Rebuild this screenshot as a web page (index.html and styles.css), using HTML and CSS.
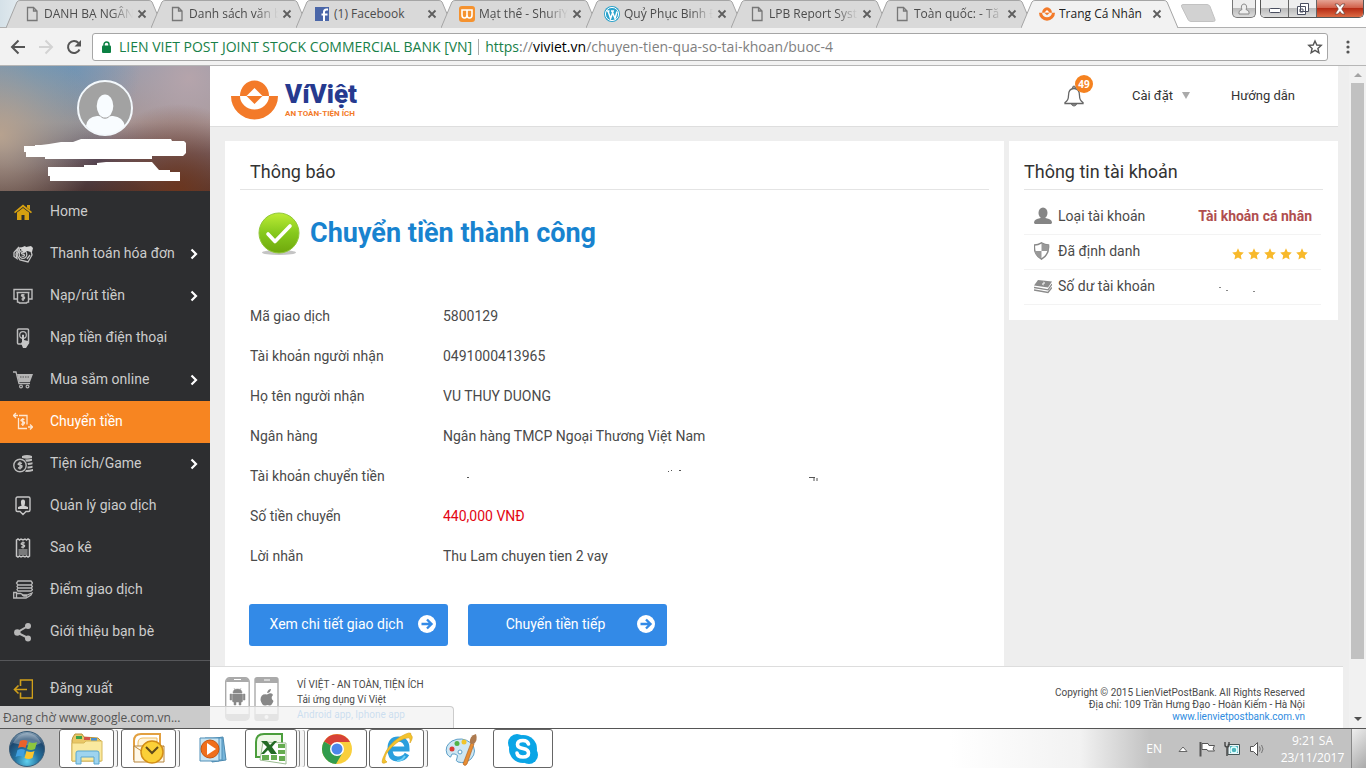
FILE: index.html
```html
<!DOCTYPE html>
<html lang="vi">
<head>
  <meta charset="UTF-8">
  <title>Trang Cá Nhân</title>
  <link rel="stylesheet" href="styles.css">
</head>
<body>
<svg class="defs" aria-hidden="true">
  <symbol id="page" viewBox="0 0 16 16"><path d="M3.500 1.500h6l3.500 3.500v9.500h-9.500zM9.500 1.500v3.500h3.500" fill="none" stroke="#777" stroke-width="1.300"/></symbol>
  <symbol id="close" viewBox="0 0 10 10"><path d="M1.500 1.500l7 7M8.500 1.500l-7 7" stroke="#5e5e5e" stroke-width="1.800"/></symbol>
  <symbol id="shape" viewBox="0 0 158 28" preserveAspectRatio="none"><path d="M0 28L11 2Q12 .5 14 .5H144Q146 .5 147 2L158 28" stroke="#a5a5a5" vector-effect="non-scaling-stroke"/></symbol>
  <symbol id="coin" viewBox="0 0 47 40"><path d="M9 16a14.500 15.500 0 0 1 29 0z" fill="#f37a29"/><path d="M0 16H9A14.500 13.500 0 0 0 38 16H47A23.500 23.500 0 0 1 0 16z" fill="#f37a29"/><path d="M23.500 8l8 8h-16z" fill="#fff"/><path d="M15.500 16h16l-8 8z" fill="#f37a29"/></symbol>
  <symbol id="star" viewBox="0 0 12 12"><path d="M6 .3l1.700 3.800 4.100.5-3 2.800.8 4.200L6 9.500l-3.600 2.100.8-4.200-3-2.800 4.100-.5z" fill="#f8b92b"/></symbol>
  <symbol id="chevron" viewBox="0 0 8 12"><path d="M1.500 1.500L6 6l-4.500 4.500" fill="none" stroke="#fff" stroke-width="2.200"/></symbol>
  <symbol id="go" viewBox="0 0 18 18"><circle cx="9" cy="9" r="9" fill="#fff"/><path d="M3.500 9h9M9 4.500L13.500 9 9 13.500" fill="none" stroke="#338ae7" stroke-width="2.400"/></symbol>
</svg>

<div class="tab-strip">
  <div class="tabs">
    <div class="tab"><svg class="tab-shape"><use href="#shape"/></svg><svg class="favicon"><use href="#page"/></svg><span class="tab-title">DANH BẠ NGÂN</span><button class="tab-close" aria-label="Đóng"><svg><use href="#close"/></svg></button></div>
    <div class="tab"><svg class="tab-shape"><use href="#shape"/></svg><svg class="favicon"><use href="#page"/></svg><span class="tab-title">Danh sách văn b</span><button class="tab-close" aria-label="Đóng"><svg><use href="#close"/></svg></button></div>
    <div class="tab"><svg class="tab-shape"><use href="#shape"/></svg>
      <svg class="favicon" viewBox="0 0 16 16"><rect x="1" y="1" width="14" height="14" fill="#4a66a8"/><path d="M14 3.500h-1.500q-2.500 0-2.500 2.500v9M7.500 8.500H13.500" fill="none" stroke="#fff" stroke-width="2"/></svg>
      <span class="tab-title short">(1) Facebook</span><button class="tab-close" aria-label="Đóng"><svg><use href="#close"/></svg></button></div>
    <div class="tab"><svg class="tab-shape"><use href="#shape"/></svg>
      <svg class="favicon" viewBox="0 0 16 16"><rect width="16" height="16" rx="3" fill="#f5922f"/><path d="M3 4v5q0 3 2.500 3T8 9V4v5q0 3 2.500 3T13 9V4z" fill="none" stroke="#fff" stroke-width="1.600"/></svg>
      <span class="tab-title">Mạt thế - ShuriY</span><button class="tab-close" aria-label="Đóng"><svg><use href="#close"/></svg></button></div>
    <div class="tab"><svg class="tab-shape"><use href="#shape"/></svg>
      <svg class="favicon" viewBox="0 0 16 16"><circle cx="8" cy="8" r="8" fill="#2ca3cc"/><circle cx="8" cy="8" r="6.600" fill="none" stroke="#fff"/><path d="M2.500 5h3M7 5h3M4 5l2.600 7.500L8.500 7M8 5l3 7.500L13 5.500" fill="none" stroke="#fff" stroke-width="1.500"/></svg>
      <span class="tab-title">Quỷ Phục Binh Đ</span><button class="tab-close" aria-label="Đóng"><svg><use href="#close"/></svg></button></div>
    <div class="tab"><svg class="tab-shape"><use href="#shape"/></svg><svg class="favicon"><use href="#page"/></svg><span class="tab-title">LPB Report Syst</span><button class="tab-close" aria-label="Đóng"><svg><use href="#close"/></svg></button></div>
    <div class="tab"><svg class="tab-shape"><use href="#shape"/></svg><svg class="favicon"><use href="#page"/></svg><span class="tab-title">Toàn quốc: - Tă</span><button class="tab-close" aria-label="Đóng"><svg><use href="#close"/></svg></button></div>
    <div class="tab active"><svg class="tab-shape"><use href="#shape"/></svg><svg class="favicon"><use href="#coin"/></svg><span class="tab-title short">Trang Cá Nhân</span><button class="tab-close" aria-label="Đóng"><svg><use href="#close"/></svg></button></div>
  </div>
  <button class="new-tab" aria-label="Thẻ mới"><svg viewBox="0 0 36 18"><path d="M3 .5h24q2 0 3 2l5 13q.5 2-1.500 2H11q-2 0-3-2L1.500 2.500Q1 .5 3 .5z" fill="#d2d2d2" stroke="#c2c2c2"/></svg></button>
  <div class="window-controls">
    <button class="win-btn user" aria-label="Người dùng"><svg viewBox="0 0 12 12"><path d="M1 11V9q0-1.500 3-2.500Q3 5 3.500 3 4 1 6 1t2.500 2Q9 5 8 6.500q3 1 3 2.500v2z" fill="#eee" stroke="#8b8b8b"/></svg></button>
    <div class="win-group">
      <button class="win-btn" aria-label="Thu nhỏ"><svg viewBox="0 0 12 12"><rect x=".5" y="5.500" width="11" height="4" rx="1" fill="#fff" stroke="#4a4f60"/></svg></button>
      <button class="win-btn" aria-label="Khôi phục"><svg viewBox="0 0 12 12"><path d="M3.500.5h8v8h-8zM.5 3.500h8v8h-8zM3 6h3v3H3z" fill="#fff" stroke="#4a4f60"/></svg></button>
      <button class="win-btn red" aria-label="Đóng cửa sổ"><svg viewBox="0 0 12 12"><path d="M1 1h3l2 2.500L8 1h3L7.700 6 11 11H8L6 8.500 4 11H1l3.300-5z" fill="#fff" stroke="#6a4038" stroke-width=".7"/></svg></button>
    </div>
  </div>
</div>

<div class="toolbar">
  <button class="tool" aria-label="Quay lại"><svg viewBox="0 0 16 16"><path d="M15 8H2.500M8.500 1.500L2 8l6.500 6.500" fill="none" stroke="#555" stroke-width="2"/></svg></button>
  <button class="tool" aria-label="Tiến"><svg viewBox="0 0 16 16"><path d="M1 8h12.500M7.500 1.500L14 8l-6.500 6.500" fill="none" stroke="#d3d3d3" stroke-width="2"/></svg></button>
  <button class="tool" aria-label="Tải lại"><svg viewBox="0 0 16 16"><path d="M13.500 10.500A6 6 0 1 1 12.500 4" fill="none" stroke="#555" stroke-width="2"/><path d="M15 1v6.500H8.500z" fill="#555"/></svg></button>
  <div class="address">
    <svg class="lock" viewBox="0 0 9 12"><path d="M2 5V3.500a2.500 2.500 0 0 1 5 0V5" fill="none" stroke="#0b8043" stroke-width="1.500"/><rect y="4.500" width="9" height="7.500" rx="1" fill="#0b8043"/></svg>
    <span class="owner">LIEN VIET POST JOINT STOCK COMMERCIAL BANK [VN]</span>
    <span class="url"><span class="scheme">https</span>://<b>viviet.vn</b>/chuyen-tien-qua-so-tai-khoan/buoc-4</span>
    <svg class="bookmark" viewBox="0 0 16 16"><path d="M8 2l1.800 4 4.400.4-3.300 3 1 4.400L8 11.400l-3.900 2.400 1-4.400-3.300-3L6.200 6z" fill="none" stroke="#555" stroke-width="1.400"/></svg>
  </div>
  <button class="dots" aria-label="Trình đơn"><svg viewBox="0 0 4 14"><g fill="#555"><circle cx="2" cy="2" r="1.600"/><circle cx="2" cy="7" r="1.600"/><circle cx="2" cy="12" r="1.600"/></g></svg></button>
</div>

<div class="viewport">
  <aside class="sidebar">
    <div class="profile">
      <svg class="avatar" viewBox="0 0 56 56"><circle cx="28" cy="28" r="27" fill="#a2a2a2"/><ellipse cx="28" cy="26" rx="8.300" ry="11.500" fill="#f8fcff"/><path d="M9 46q1-9 11-10 4-.5 5 2 3 1.500 6 0 1-2.500 5-2 10 1 12 10-8 9-20 9T9 46z" fill="#f8fcff"/><circle cx="28" cy="28" r="27" fill="none" stroke="#f3f8fc" stroke-width="2"/></svg>
      <svg class="strokes" viewBox="0 0 162 43"><path d="M0 7h11V6h6l8-1 12-2h12l8-3h90l1 2h12l2 2v10l-3 3h-31v3H21v-2H2v-5H0zM24 28h36v-2h13v-2l9-1h46l7 8h11v2h10v9H26v-5h-2z" fill="#fff"/></svg>
    </div>
    <nav class="menu">
      <a href="#"><svg class="icon" viewBox="0 0 20 20"><path d="M1 10L10 2.500 19 10l-1 1.200L10 5l-8 6.200z" fill="#d6a010"/><path d="M4 10.500L10 6l6 4.500V18h-4.500v-5h-3v5H4zM14 3h3v5l-3-2.500z" fill="#d6a010"/></svg><span>Home</span></a>
      <a href="#"><svg class="icon" viewBox="0 0 20 20"><g fill="none" stroke="#c4c4c4" stroke-width="1.300"><path d="M6 3L1 8.500v4l3 2L3 10z"/><path d="M7 4l11 3 1 4-4 7-8-2-3-5z"/><circle cx="10" cy="10.500" r="3.800"/><path d="M11.500 9q-3-1.500-3 .5l3 1.500q0 2-3 1M14 15l3-4M5 9l2-3"/></g><path d="M7 4l5-2 1 1 5-1 2 2-1 4-5-1-3 2z" fill="#d5d5d5"/></svg><span>Thanh toán hóa đơn</span><svg class="more"><use href="#chevron"/></svg></a>
      <a href="#"><svg class="icon" viewBox="0 0 20 20"><g fill="none" stroke="#bdbdbd" stroke-width="1.400"><path d="M4 13H1V3.500h18V13h-3M3.500 6.500h13"/><path d="M4.500 7v9q2 0 2 1h7q0-1 2-1V7"/><path d="M11.500 9q-3-1-3 .8l3 1.500q.3 2.500-3 1.500M10 8v7"/></g></svg><span>Nạp/rút tiền</span><svg class="more"><use href="#chevron"/></svg></a>
      <a href="#"><svg class="icon" viewBox="0 0 20 20"><rect x="4.500" y="1" width="11" height="15" rx="1" fill="none" stroke="#bdbdbd" stroke-width="1.500"/><circle cx="10" cy="7" r="3.300" fill="none" stroke="#bdbdbd" stroke-width="1.200"/><path d="M9 7q1-1 2 0v5l4 1v4l-2 3h-3l-2-5 1-1z" fill="#c6c6c6"/></svg><span>Nạp tiền điện thoại</span></a>
      <a href="#"><svg class="icon" viewBox="0 0 20 20"><path d="M0 2h3l3 11.500h11" fill="none" stroke="#b5b5b5" stroke-width="1.300"/><path d="M4 4h16l-3 8H6z" fill="#b5b5b5"/><path d="M7 7h10" stroke="#555" stroke-dasharray="1.500 1"/><g fill="none" stroke="#b5b5b5" stroke-width="1.200"><circle cx="8" cy="16.500" r="1.400"/><circle cx="14.500" cy="16.500" r="1.400"/></g></svg><span>Mua sắm online</span><svg class="more"><use href="#chevron"/></svg></a>
      <a href="#" class="active"><svg class="icon" viewBox="0 0 20 20"><g fill="none" stroke="#fff" stroke-opacity=".8" stroke-width="1.300"><path d="M5 3.500H.5M3 1L.5 3.500 3 6M15 15h4.500M17 12.500l2.500 2.500-2.500 2.500M6 3.500h8v9M14 16.500H5.500V6M11.500 7.500q-3.500-1-3.500 1l3.500 2q0 2.500-3.500 1.500M9.800 6v8"/></g></svg><span>Chuyển tiền</span></a>
      <a href="#"><svg class="icon" viewBox="0 0 20 20"><g fill="none" stroke="#bdbdbd" stroke-width="1.400"><circle cx="7" cy="11.500" r="6.200"/><path d="M9 9.500q-3.800-1.500-3.800.7L9 12q.2 2.700-4 1.700M7 7.500v8"/></g><path d="M9 2q5-2 10 0v2q-5 1.500-10 0zM12 5.500q4 0 7-.8v2q-3 1-5.500 1zM14.500 9q2.500 0 5-.8v2q-2 .8-4.500.8zM14.500 12.500q3 0 5-.8v2q-3 1-5 .8zM13 16q4 0 7-1v2q-4 1.200-8 .8z" fill="#bdbdbd"/></svg><span>Tiện ích/Game</span><svg class="more"><use href="#chevron"/></svg></a>
      <a href="#"><svg class="icon" viewBox="0 0 20 20"><path d="M4.500 1h11q1.500 0 1.500 1.500V14q0 1.500-1.500 1.500H13l-3 3-3-3H4.500Q3 15.500 3 14V2.500Q3 1 4.500 1z" fill="none" stroke="#c6c6c6" stroke-width="1.400"/><path d="M8 7q-.5-3.500 2-3.500T12 7q0 1.500-.8 2.500l3.800 1.500v2H5v-2l3.800-1.500Q8 8.500 8 7z" fill="#d0d0d0"/></svg><span>Quản lý giao dịch</span></a>
      <a href="#"><svg class="icon" viewBox="0 0 20 20"><path d="M3.500 2l1.500-1 1.500 1L8 1l2 1 2-1 1.500 1L15 1l1.500 1v16l-1.500 1-1.500-1-1.500 1-2-1-2 1-1.500-1L5 19l-1.500-1z" fill="none" stroke="#c6c6c6" stroke-width="1.500"/><path d="M11.800 4.800Q8 4 8.200 6l3.400 1.500Q12 9.800 8 9M10 3.500v7M5.500 12h9M5.500 14h9M5.500 16h9" fill="none" stroke="#c6c6c6" stroke-width="1.200"/></svg><span>Sao kê</span></a>
      <a href="#"><svg class="icon" viewBox="0 0 20 20"><g fill="none" stroke="#b8b8b8" stroke-width="1.300"><path d="M5 1h13l1.500 2L18 5H5L3.500 3zM5 5l-1 1.500L5 8h13l1.500-1.500L18 5M5 8l-1 1.500L5 11h13l1.500-1.500L18 8M.7 12.500H3.500V18H.7zM3.500 13.500h4l3 1.500H14l5-2-1 2-5 3H3.500M9 15l2 1h3"/></g></svg><span>Điểm giao dịch</span></a>
      <a href="#"><svg class="icon" viewBox="0 0 20 20"><path d="M15 4L4 10.500 15 16" fill="none" stroke="#b8b8b8" stroke-width="2"/><g fill="#b8b8b8"><circle cx="15" cy="4" r="3"/><circle cx="4.300" cy="10.500" r="3.200"/><circle cx="15" cy="16.500" r="3"/></g></svg><span>Giới thiệu bạn bè</span></a>
      <a href="#" class="logout"><svg class="icon" viewBox="0 0 20 20"><path d="M7.500 7V1h12v18h-12v-5.500M14 10.500H1.500M5.500 6.500l-4 4 4 4" fill="none" stroke="#d1a01a" stroke-width="1.600"/></svg><span>Đăng xuất</span></a>
    </nav>
  </aside>

  <div class="content">
    <header class="site-header">
      <a href="#" class="logo">
        <svg class="logo-mark"><use href="#coin"/></svg>
        <span class="logo-text"><span class="logo-name">VíViệt</span><span class="logo-slogan">AN TOÀN-TIỆN ÍCH</span></span>
      </a>
      <div class="header-links">
        <a href="#" class="bell" aria-label="Thông báo"><svg viewBox="0 0 20 22"><path d="M1 17.500q3.500-2 3.500-7Q4.500 3.500 10 3.500t5.500 7q0 5 3.500 7v1H1z" fill="none" stroke="#666" stroke-width="1.300"/><path d="M8.500 3Q8.500 1 10 1t1.500 2M7.500 19q.5 2 2.500 2t2.500-2z" fill="#999" stroke="#666"/></svg><span class="badge">49</span></a>
        <a href="#" class="settings">Cài đặt <svg viewBox="0 0 8 7"><path d="M0 0h8L4 7z" fill="#aaa"/></svg></a>
        <a href="#">Hướng dẫn</a>
      </div>
    </header>

    <div class="panels">
      <section class="panel main-panel">
        <h2 class="panel-title indent">Thông báo</h2>
        <div class="success">
          <svg viewBox="0 0 42 44">
            <defs><linearGradient id="green" x2="0" y2="1"><stop stop-color="#bdec35"/><stop offset=".5" stop-color="#86c91d"/><stop offset="1" stop-color="#6fa80c"/></linearGradient></defs>
            <ellipse cx="21" cy="40.500" rx="17" ry="2.500" fill="#c4c4c4"/><circle cx="21" cy="21" r="20" fill="url(#green)" stroke="#92c83a"/><path d="M10 22l7 7.500L32 14" fill="none" stroke="#fff" stroke-width="3.600" stroke-linecap="round" stroke-linejoin="round"/>
          </svg>
          <h1>Chuyển tiền thành công</h1>
        </div>
        <table class="details">
          <tr><th>Mã giao dịch</th><td>5800129</td></tr>
          <tr><th>Tài khoản người nhận</th><td>0491000413965</td></tr>
          <tr><th>Họ tên người nhận</th><td>VU THUY DUONG</td></tr>
          <tr><th>Ngân hàng</th><td>Ngân hàng TMCP Ngoại Thương Việt Nam</td></tr>
          <tr><th>Tài khoản chuyển tiền</th><td><svg class="marks" viewBox="0 0 380 16"><path d="M24 9.500h2M225 3.500h1M228 2.500h1M236 2.500h2M366 9.500h6M371 9v4M374 10v3" stroke="#555" fill="none"/></svg></td></tr>
          <tr><th>Số tiền chuyển</th><td class="amount">440,000 VNĐ</td></tr>
          <tr><th>Lời nhắn</th><td>Thu Lam chuyen tien 2 vay</td></tr>
        </table>
        <div class="actions">
          <button><span>Xem chi tiết giao dịch</span><svg><use href="#go"/></svg></button>
          <button><span>Chuyển tiền tiếp</span><svg><use href="#go"/></svg></button>
        </div>
      </section>

      <section class="panel account">
        <h2 class="panel-title">Thông tin tài khoản</h2>
        <ul>
          <li><svg viewBox="0 0 18 18"><ellipse cx="9" cy="6" rx="4.500" ry="5.500" fill="#858585"/><path d="M0 16q0-3 3-4l3.500-1h5L15 12q3 1 3 4l-1 1H1z" fill="#858585"/></svg><span>Loại tài khoản</span><strong>Tài khoản cá nhân</strong></li>
          <li><svg viewBox="0 0 18 18"><path d="M7.500.8Q11 3 14.500 3q1 9.500-7 14.200Q-.5 12.500.5 3 4 3 7.500.8z" fill="#fff" stroke="#888" stroke-width="1.500"/><path d="M7.500 1v8h7V3Q11 3 7.500 1zM7.500 9v8Q1 13 .5 9z" fill="#999"/></svg><span>Đã định danh</span>
            <div class="stars" role="img" aria-label="5 sao"><svg><use href="#star"/></svg><svg><use href="#star"/></svg><svg><use href="#star"/></svg><svg><use href="#star"/></svg><svg><use href="#star"/></svg></div></li>
          <li><svg viewBox="0 0 18 18"><path d="M4 3l14 1.500-4 6L0 8.500z" fill="#8c8c8c"/><path d="M9 5l2 1-3 1 2 1" fill="none" stroke="#ddd"/><path d="M0 10.500l14 2.300L18 7M0 13l14 2.500 4-5" fill="none" stroke="#8c8c8c" stroke-width="1.300"/></svg><span>Số dư tài khoản</span><svg class="balance" viewBox="0 0 100 16"><path d="M7 9.500h2M14 12.500h2M41 13.500h2" stroke="#888"/></svg></li>
        </ul>
      </section>
    </div>

    <footer class="site-footer">
      <div class="apps">
        <svg viewBox="0 0 54 44">
          <rect x=".7" y=".7" width="23.500" height="42.500" rx="4" fill="#fff" stroke="#aaa" stroke-width="1.400"/><path d="M1 5q0-4 4-4h15q4 0 4 4zM1 37h23v2q0 4-4 4H5q-4 0-4-4z" fill="#aaa"/><path d="M9 2.500h7" stroke="#fff"/>
          <path d="M8 16q0-4 4.500-4t4.500 4zM7.500 17h10v7q0 1-1 1h-8q-1 0-1-1zM5 17h1.800v6H5zM18.200 17H20v6h-1.800zM9 25h2v3H9zM14 25h2v3h-2zM9 11l1 2M16 11l-1 2" fill="#888" stroke="#888" stroke-width=".5"/>
          <rect x="30" y=".7" width="23" height="42.500" rx="2" fill="#fff" stroke="#aaa" stroke-width="1.400"/><path d="M30 1h23v5H30zM30 37h23v6H30z" fill="#aaa"/><path d="M39 3h6" stroke="#fff"/><circle cx="41.500" cy="40" r="2" fill="#fff"/>
          <path d="M42 16q1-4 4-4-.5 4-4 4zM42 17.500q5-2.500 6 .5-3 3 .5 6-2 5-4 4.500-2-1-4 0Q37 29 35.500 23q0-6.500 6.500-5.500z" fill="#888"/>
        </svg>
        <div class="app-text">VÍ VIỆT - AN TOÀN, TIỆN ÍCH<br>Tải ứng dụng Ví Việt<br><a href="#">Android app, Iphone app</a></div>
      </div>
      <div class="copyright">Copyright © 2015 LienVietPostBank. All Rights Reserved<br>Địa chỉ: 109 Trần Hưng Đạo - Hoàn Kiếm - Hà Nội<br><a href="#">www.lienvietpostbank.com.vn</a></div>
    </footer>
  </div>

  <div class="scrollbar">
    <svg viewBox="0 0 17 17"><path d="M5 11h8L9 7z" fill="#a3a3a3"/></svg>
    <div class="thumb"></div>
    <svg class="down" viewBox="0 0 17 17"><path d="M5 6h8l-4 4z" fill="#505050"/></svg>
  </div>
  <div class="status">Đang chờ www.google.com.vn...</div>
</div>

<div class="taskbar">
  <button class="start" aria-label="Start"><svg viewBox="0 0 38 38">
    <defs><radialGradient id="orb" cx=".5" cy=".85" r=".85"><stop stop-color="#5fd0ee"/><stop offset=".4" stop-color="#24729f"/><stop offset=".75" stop-color="#1d476e"/><stop offset="1" stop-color="#90a9bd"/></radialGradient></defs>
    <circle cx="19" cy="19" r="17.500" fill="url(#orb)" stroke="#395c78"/><path d="M5 13Q10 3 19 3t14 10q-8 5-28 0z" fill="#fff" opacity=".28"/>
    <path d="M12 11q4-2 7.500 0l-2 7q-3.500-2-7.500 0z" fill="#e9622b"/><path d="M21 12q4 2 8 0l-2 7q-4 2-8 0z" fill="#8cc63e"/><path d="M9.500 20q4-2 7.500 0l-2 7q-3.500-2-7.500 0z" fill="#3f9fe0"/><path d="M18.500 21q4 2 8 0l-2 7q-4 2-8 0z" fill="#fbc52e"/></svg></button>
  <div class="tasks">
    <button class="task open stacked" aria-label="Explorer"><svg viewBox="0 0 34 34"><path d="M3 5l2-3h7l2 3 14 1 3 3v20H2V8z" fill="#e9c766" stroke="#b7933c"/><path d="M6 4h6v3H6z" fill="#3aa34c"/><path d="M14 5h6v3h-6z" fill="#d2544a"/><path d="M21 6h6v3h-6z" fill="#4a8fcc"/><path d="M2 11h12l2-2h16v20H2z" fill="#fae99f" stroke="#d8b95a"/><path d="M6 32V21q0-2 2-2h19q2 0 2 2v11h-5v-7H11v7z" fill="#9ed4ef" stroke="#5aa7cf"/></svg></button>
    <button class="task open stacked" aria-label="Outlook"><svg viewBox="0 0 34 34"><path d="M2 28V9q0-7 7-7h19v21H2z" fill="#fff" stroke="#e2a040" stroke-width="2"/><path d="M6 25V11q0-5 5-5h14v19z" fill="#fff4d8" stroke="#f0bd61"/><path d="M2 14h30v16H2z" fill="#fff8e7" stroke="#b7863e"/><path d="M2 14l15 10 15-10" fill="none" stroke="#c38d3d"/><circle cx="20" cy="20" r="11" fill="#fbd038" stroke="#d38e16" stroke-width="1.500"/><path d="M14 15l6 6 6-6" fill="none" stroke="#5f4a1a" stroke-width="2"/></svg></button>
    <button class="task" aria-label="Media Player"><svg viewBox="0 0 34 34"><path d="M13 7l14-2 3 23-14 2z" fill="#76b5da" stroke="#4d89ae"/><path d="M9 6h17v22H9z" fill="#abd7ef" stroke="#4d8eb8"/><path d="M4 6h19v23H4z" fill="#c9e5f3" stroke="#508fb7"/><circle cx="14" cy="17" r="9" fill="#f06f1c" stroke="#c7550f"/><path d="M11 11l9 6-9 6z" fill="#fff"/></svg></button>
    <button class="task open deck" aria-label="Excel"><svg viewBox="0 0 34 34"><path d="M2 25V10q0-8 8-8h18v23z" fill="#eff8e8" stroke="#4b9e3c" stroke-width="2"/><path d="M9 10l23 1v21L6 28z" fill="#fff" stroke="#9bbc91"/><path d="M24 12h7v4h-7zM24 18h7v4h-7zM8 23h7v5H8zM17 23h6v5h-6zM25 24h6v5h-6z" fill="#65ac50"/><path d="M7 9h6l3 4 4-4h3l-5 6 5 7h-6l-3-4-4 4H7l6-7z" fill="#236b24"/></svg></button>
    <button class="task open" aria-label="Chrome"><svg viewBox="0 0 34 34"><circle cx="17" cy="17" r="15" fill="#f9cf3c"/><path d="M17 17L4 9.500A15 15 0 0 1 30 10H17z" fill="#d74237"/><path d="M4 9.500A15 15 0 0 0 16 32l7-12-6-3z" fill="#329c4d"/><circle cx="17" cy="17" r="7" fill="#fff"/><circle cx="17" cy="17" r="5.500" fill="#4b87ea"/></svg></button>
    <button class="task open stacked" aria-label="Internet Explorer"><svg viewBox="0 0 34 34"><path d="M27 22q-3 5-9 5-8 0-8-10t8-10q9 0 9 10H11" fill="none" stroke="#2b9fdd" stroke-width="5"/><path d="M25 24q-3 5-8 5" fill="none" stroke="#6fd0f5" stroke-width="2"/><path d="M7 30q-7 4-4-4Q8 12 20 5t11-2q3 2-1 8 1-6-3-5-7 1-15 9T5 28z" fill="#f3c32d" stroke="#d8a11d" stroke-width=".6"/></svg></button>
    <button class="task" aria-label="Paint"><svg viewBox="0 0 34 34"><path d="M3 22Q0 14 8 9q10-5 19 2 7 8 0 16-6 5-13 3-3-1-1-4t-2-4-4 2-4-2z" fill="#cfe7f3" stroke="#5c9fc8"/><circle cx="8" cy="17" r="2.500" fill="#dc3c36"/><circle cx="13" cy="11.500" r="2.500" fill="#52b347"/><circle cx="20" cy="10" r="2.500" fill="#f1c528"/><circle cx="16" cy="20" r="2" fill="#fff" stroke="#5c9fc8"/><path d="M19 32l8-21 3 1-7 20q-2 3-4 0z" fill="#e78e35" stroke="#a85d20" stroke-width=".6"/><path d="M26 11q-1-7 6-9 2 6-2 10z" fill="#ad7a4f"/></svg></button>
    <button class="task open" aria-label="Skype"><svg viewBox="0 0 34 34"><circle cx="11" cy="11" r="9" fill="#0aa5e6"/><circle cx="23" cy="23" r="9" fill="#0aa5e6"/><circle cx="17" cy="17" r="14" fill="#0aa5e6"/><path d="M22.500 12q-1-3.500-5.500-3.500-5.500 0-5.500 4 0 3 5.500 4t5.500 4.500q0 4-5.500 4t-6-4" fill="none" stroke="#fff" stroke-width="3.600" stroke-linecap="round"/></svg></button>
  </div>
  <div class="tray">
    <span class="lang">EN</span>
    <svg class="up" viewBox="0 0 10 8"><path d="M1 6.500L5 2l4 4.500z" fill="#fff" stroke="#666"/></svg>
    <svg viewBox="0 0 16 16"><path d="M1.500 1v14.500" stroke="#555" stroke-width="2"/><path d="M3 2.500h6l1 2h5.500L14 8l1.500 2H9L8 8.500H3z" fill="#fff" stroke="#555"/></svg>
    <svg viewBox="0 0 16 16"><path d="M4 3.500h11.500v10H4z" fill="#e9f4f8" stroke="#455"/><path d="M6 5h8v7H6z" fill="#4eb6bd"/><path d="M1 1v3q0 2 2 2t2-2V1M3 6v9" fill="none" stroke="#444" stroke-width="1.400"/><circle cx="10" cy="9" r="3" fill="none" stroke="#e4ffff" stroke-width="1.500"/></svg>
    <svg viewBox="0 0 16 16"><path d="M1.500 5.500h3l4-4v13l-4-4h-3z" fill="#fff" stroke="#555"/><path d="M10.500 5.500q1.500 2.500 0 5M12.500 4q3 4 0 8" fill="none" stroke="#777"/></svg>
    <div class="clock">9:21 SA<br>23/11/2017</div>
    <button class="show-desktop" aria-label="Màn hình nền"></button>
  </div>
</div>
</body>
</html>
```
FILE: styles.css
```css
* {
  box-sizing: border-box;
}

body {
  margin: 0;
  height: 100vh;
  display: flex;
  flex-direction: column;
  overflow: hidden;
  font-family: Roboto, "Liberation Sans", sans-serif;
  font-size: 14px;
  color: #4a4a4a;
}

a {
  color: inherit;
  text-decoration: none;
}

button {
  padding: 0;
  border: 0;
  background: none;
  font: inherit;
  cursor: pointer;
}

svg {
  display: block;
  flex: none;
}

.defs {
  position: absolute;
  width: 0;
  height: 0;
}

/* browser window */
.tab-strip {
  flex: none;
  height: 28px;
  display: flex;
  padding-left: 6px;
  background: linear-gradient(90deg, #d5e1e8, #fff 60px);
  border-bottom: 1px solid #b0b0b0;
  font: 12px/28px "Open Sans", "Noto Sans", sans-serif;
}

.tabs {
  display: flex;
}

.tab {
  position: relative;
  width: 157px;
  height: 28px;
  margin-right: -12px;
  padding: 0 16px 0 18px;
  display: flex;
  align-items: center;
  color: #4c4c4c;
}

.tab-shape {
  position: absolute;
  left: 0;
  top: 0;
  width: 100%;
  height: 100%;
  fill: #d9d9d9;
}

.tab.active .tab-shape {
  fill: #f2f2f2;
}

.tab.active {
  color: #222;
}

.favicon {
  position: relative;
  width: 16px;
  height: 16px;
}

.tab-title {
  position: relative;
  flex: 1;
  min-width: 0;
  margin: 0 4px;
  overflow: hidden;
  white-space: nowrap;
  -webkit-mask-image: linear-gradient(90deg, #000 75%, transparent);
  mask-image: linear-gradient(90deg, #000 75%, transparent);
}

.tab-title.short {
  -webkit-mask-image: none;
  mask-image: none;
}

.tab-close {
  position: relative;
}

.tab-close svg {
  width: 10px;
  height: 10px;
}

.new-tab {
  margin: -1px 0 0 14px;
}

.new-tab svg {
  width: 36px;
  height: 18px;
}

.window-controls {
  margin-left: auto;
  padding-right: 2px;
  display: flex;
  align-items: flex-start;
  gap: 4px;
}

.win-group {
  display: flex;
  border: 1px solid #555;
  border-top: 0;
  border-radius: 0 0 5px 5px;
  overflow: hidden;
}

.win-btn {
  width: 28px;
  height: 17px;
  display: flex;
  align-items: center;
  justify-content: center;
  background: linear-gradient(#eee 45%, #bbb 50%, #ddd);
  border-right: 1px solid #666;
}

.win-btn svg {
  width: 12px;
  height: 12px;
}

.win-btn.user {
  width: 24px;
  height: 18px;
  border: 1px solid #777;
  border-top: 0;
  border-radius: 0 0 5px 5px;
}

.win-btn.red {
  width: 46px;
  border: 0;
  background: linear-gradient(#e5a393, #d1614b 45%, #b72c15 50%, #dc6b44);
}

.toolbar {
  flex: none;
  height: 38px;
  display: flex;
  align-items: center;
  padding: 0 16px 0 10px;
  background: #f2f2f2;
  border-bottom: 1px solid #b6b6b6;
}

.tool {
  margin-right: 12px;
}

.address {
  flex: 1;
  height: 28px;
  margin: 0 18px 0 -2px;
  padding: 0 4px 0 9px;
  display: flex;
  align-items: center;
  background: #fff;
  border: 1px solid #a6a6a6;
  border-radius: 3px;
  font: 14px/26px "Open Sans", "Noto Sans", sans-serif;
  white-space: nowrap;
}

.tool svg {
  width: 16px;
  height: 16px;
}

.lock {
  width: 9px;
  height: 12px;
  margin-right: 8px;
}

.owner,
.scheme {
  color: #188048;
}

.url {
  margin-left: 6px;
  padding-left: 6px;
  border-left: 1px solid #aaa;
  line-height: 16px;
  color: #808080;
}

.url b {
  font-weight: 400;
  color: #000;
}

.bookmark {
  width: 16px;
  height: 16px;
  margin-left: auto;
}

.dots svg {
  width: 4px;
  height: 14px;
}

/* page */
.viewport {
  position: relative;
  flex: 1;
  min-height: 0;
  display: flex;
  background: #eee;
}

.sidebar {
  flex: none;
  width: 210px;
  background: #2d2e30;
  overflow: hidden;
}

.profile {
  height: 125px;
  padding-top: 14px;
  display: flex;
  flex-direction: column;
  align-items: center;
  gap: 3px;
  background:
    radial-gradient(circle at 85% 100%, #6b361f, transparent 40%),
    radial-gradient(circle at 0 55%, #b7a28f, transparent 45%),
    radial-gradient(circle at 15% 0, #6794b9, transparent 50%),
    radial-gradient(circle at 90% 10%, #b5a4ab, transparent 55%),
    linear-gradient(#8396ac, #a08d88 45%, #5a4b59 70%, #4a3434);
}

.avatar {
  width: 56px;
  height: 56px;
}

.strokes {
  width: 162px;
  height: 43px;
}

.menu a {
  height: 42px;
  padding: 0 12px 0 13px;
  display: flex;
  align-items: center;
  color: #ccc;
}

.menu span {
  flex: 1;
  margin-left: 17px;
  padding-bottom: 2px;
}

.menu .icon {
  width: 20px;
  height: 20px;
}

.menu .more {
  width: 8px;
  height: 12px;
}

.menu .active {
  background: #f78521;
  color: #fff;
}

.menu .logout {
  height: 56px;
  margin-top: 7px;
  border-top: 1px solid #56575a;
}

.content {
  flex: 1;
  min-width: 0;
  display: flex;
  flex-direction: column;
}

.site-header {
  flex: none;
  height: 61px;
  margin-right: 11px;
  padding: 0 43px 0 21px;
  display: flex;
  align-items: center;
  justify-content: space-between;
  background: #fff;
  border-bottom: 1px solid #dedede;
}

.logo {
  display: flex;
  align-items: center;
  gap: 7px;
  padding-top: 8px;
}

.logo-mark {
  width: 47px;
  height: 40px;
}

.logo-text {
  display: flex;
  flex-direction: column;
  white-space: nowrap;
}

.logo-name {
  font-size: 26px;
  font-weight: 900;
  line-height: 28px;
  color: #263a8f;
}

.logo-slogan {
  font-size: 8px;
  font-weight: 700;
  line-height: 12px;
  color: #f37a29;
}

.header-links {
  display: flex;
  align-items: center;
  padding-bottom: 2px;
  font-size: 13px;
  color: #333;
}

.bell {
  position: relative;
  margin-right: 48px;
  padding-top: 2px;
}

.bell svg {
  width: 20px;
  height: 22px;
}

.badge {
  position: absolute;
  left: 11px;
  top: -8px;
  width: 18px;
  height: 18px;
  border-radius: 50%;
  background: #f58220;
  color: #fff;
  font: 700 10px/18px "Open Sans", sans-serif;
  text-align: center;
}

.settings {
  display: flex;
  align-items: center;
  gap: 9px;
  margin-right: 41px;
}

.settings svg {
  width: 8px;
  height: 7px;
}

.panels {
  flex: 1;
  min-height: 0;
  display: flex;
  align-items: flex-start;
  gap: 5px;
  padding: 14px 11px 0 15px;
}

.panel {
  padding: 15px;
  background: #fff;
}

.main-panel {
  flex: 1;
  align-self: stretch;
}

.panel-title {
  margin: 0;
  height: 34px;
  border-bottom: 1px solid #e4e4e4;
  font-size: 18px;
  font-weight: 400;
  line-height: 32px;
  color: #333;
}

.indent {
  padding-left: 10px;
}

.success {
  display: flex;
  align-items: flex-start;
  gap: 10px;
  padding: 22px 0 0 18px;
}

.success svg {
  width: 42px;
  height: 44px;
}

.success h1 {
  margin: 0;
  font-size: 27px;
  line-height: 42px;
  color: #1883cf;
}

.details {
  margin: 40px 0 0 10px;
  border-collapse: collapse;
}

.details th,
.details td {
  height: 40px;
  padding: 0;
  font-weight: 400;
  text-align: left;
}

.details th {
  width: 193px;
}

.details .amount {
  color: #e30613;
}

.marks {
  width: 380px;
  height: 16px;
}

.actions {
  display: flex;
  gap: 20px;
  margin: 28px 0 0 9px;
}

.actions button {
  width: 199px;
  height: 42px;
  padding: 0 12px 2px 6px;
  display: flex;
  align-items: center;
  border-radius: 3px;
  background: #338ae7;
  color: #fff;
}

.actions span {
  flex: 1;
}

.actions svg {
  width: 18px;
  height: 18px;
}

.account {
  width: 329px;
}

.account ul {
  list-style: none;
  margin: 10px 2px 0 0;
  padding: 0;
}

.account li {
  height: 35px;
  padding: 0 9px 2px 10px;
  display: flex;
  align-items: center;
  border-bottom: 1px solid #f3f3f3;
}

.account li > svg {
  width: 18px;
  height: 18px;
}

.account li span {
  flex: 1;
  margin-left: 6px;
}

.account strong {
  color: #b04e4e;
  font-weight: 700;
}

.account li .balance {
  width: 100px;
  height: 16px;
}

.stars {
  display: flex;
  gap: 4px;
  padding: 6px 4px 0 0;
}

.stars svg {
  width: 12px;
  height: 12px;
}

.site-footer {
  flex: none;
  height: 62px;
  margin-right: 6px;
  padding: 10px 38px 0 15px;
  display: flex;
  justify-content: space-between;
  background: #fff;
  border-top: 1px solid #ddd;
  font-size: 10px;
}

.site-footer a {
  color: #2d8be0;
}

.apps {
  display: flex;
  gap: 18px;
}

.apps svg {
  width: 54px;
  height: 44px;
}

.app-text {
  line-height: 15px;
}

.copyright {
  padding-top: 10px;
  line-height: 12px;
  text-align: right;
}

.scrollbar {
  flex: none;
  width: 17px;
  display: flex;
  flex-direction: column;
  background: #f1f1f1;
}

.scrollbar svg {
  width: 17px;
  height: 17px;
}

.thumb {
  height: 87%;
  margin: 0 2px;
  background: #c1c1c1;
}

.down {
  margin-top: auto;
}

.status {
  position: absolute;
  left: 0;
  bottom: 0;
  width: 454px;
  height: 22px;
  padding-left: 3px;
  border: 1px solid #ccc;
  border-width: 1px 1px 0 0;
  border-radius: 0 4px 0 0;
  background: rgba(242, 242, 242, .8);
  font: 12px/21px "Open Sans", "Noto Sans", sans-serif;
  color: #555;
}

/* taskbar */
.taskbar {
  flex: none;
  height: 40px;
  display: flex;
  border-top: 1px solid #555;
  background: linear-gradient(90deg, #c3c3c3 58px, #f6f6f6 64px, #fff 130px, #fff 950px, #f2f2f2 1080px, #c2c2c2 1150px);
}

.start {
  width: 59px;
  padding-left: 8px;
}

.start svg {
  width: 38px;
  height: 38px;
}

.tasks {
  display: flex;
  gap: 2px;
}

.task {
  width: 60px;
  height: 39px;
  display: flex;
  align-items: center;
  justify-content: center;
}

.task svg {
  width: 34px;
  height: 34px;
}

.open {
  border: 1px solid #666;
  border-radius: 3px;
  background: #fff;
}

.stacked {
  width: 55px;
  margin-right: 5px;
  box-shadow: 4px 0 0 -1px #f5f5f5, 5px 0 0 -1px #777;
}

.deck {
  width: 52px;
  margin-right: 8px;
  box-shadow: 3px 0 0 -1px #f5f5f5, 4px 0 0 -1px #888, 8px 0 0 -1px #f5f5f5, 9px 0 0 -1px #aaa;
}

.tray {
  margin-left: auto;
  display: flex;
  align-items: center;
  color: #fff;
  font: 12px/17px "Open Sans", "Noto Sans", sans-serif;
}

.tray svg {
  width: 16px;
  height: 16px;
  margin-right: 9px;
}

.lang {
  margin-right: 16px;
}

.tray .up {
  width: 10px;
  height: 8px;
  margin-right: 11px;
}

.clock {
  width: 77px;
  text-align: center;
}

.show-desktop {
  width: 15px;
  height: 39px;
  border-left: 1px solid #888;
  background: linear-gradient(135deg, #eee, #aaa);
}
```
